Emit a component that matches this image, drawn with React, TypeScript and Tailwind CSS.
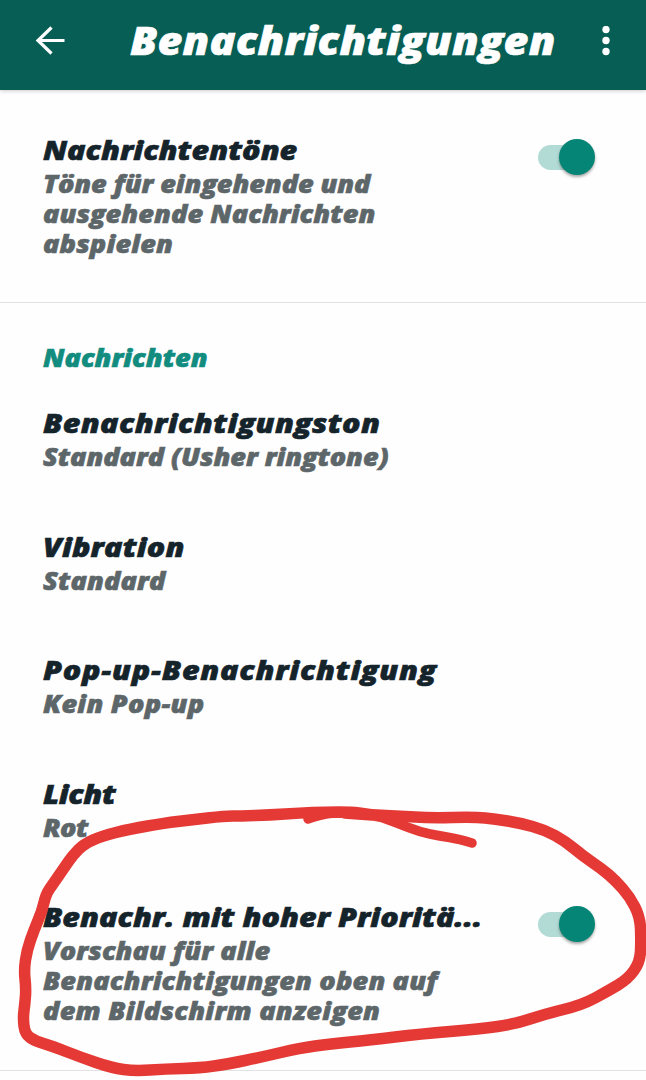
import React from 'react';

type Line = { text: string; tracking: string };

interface RowProps {
  title: Line;
  lines: Line[];
  toggle?: boolean;
}

const TAIL: [number, number][] = [
  [472, 843], [459, 839], [440, 836], [420, 832], [397, 823], [372, 814], [352, 813], [332, 813], [320, 815], [308, 819],
];

const LOOP: [number, number][] = [
  [380, 816], [366, 814], [352, 812], [325, 812], [300, 813], [270, 815], [240, 816], [225, 816], [190, 820], [165, 823], [130, 829],
  [102, 836], [84, 844], [73, 855], [64, 868], [53, 884], [46, 894], [42, 911], [34, 930], [27, 950],
  [24, 970], [26, 988], [25, 1003], [23, 1018], [25, 1034], [35, 1041], [52, 1046], [80, 1057],
  [112, 1068], [135, 1071], [165, 1069], [200, 1068], [228, 1064], [262, 1057], [300, 1048],
  [330, 1044], [370, 1040], [420, 1034], [480, 1029], [515, 1024], [545, 1014], [582, 1005],
  [608, 991], [628, 979], [640, 962], [641, 940], [640, 917], [630, 897], [615, 880], [602, 869],
  [583, 856], [565, 841], [545, 830], [520, 823], [495, 819], [475, 817], [430, 818], [400, 816],
  [372, 815], [345, 813],
];

// Smooth the hand drawn points with quadratic segments
const toPath = (points: [number, number][]) => {
  let d = `M${points[0][0]} ${points[0][1]}`;
  for (let i = 1; i < points.length - 1; i++) {
    const [x, y] = points[i];
    const [nx, ny] = points[i + 1];
    d += ` Q${x} ${y} ${(x + nx) / 2} ${(y + ny) / 2}`;
  }
  const [lx, ly] = points[points.length - 1];
  return `${d} L${lx} ${ly}`;
};

const Toggle: React.FC = () => (
  <div className="flex h-[38px] items-center">
    <div className="-mr-[19px] h-[25px] w-10 shrink-0 rounded-full bg-[#b2dbd5]"></div>
    <div className="z-10 size-9 shrink-0 rounded-full bg-[#048576] shadow-[0_2px_3px_rgba(0,0,0,0.35)]"></div>
  </div>
);

const Row: React.FC<RowProps> = ({ title, lines, toggle }) => (
  <div className="flex justify-between pl-[43px] pr-[51px]">
    <div className="origin-left scale-x-[1.13] whitespace-nowrap">
      <h2 className={`pb-[3px] text-[27px] leading-[32px] text-[#15232b] ${title.tracking}`}>{title.text}</h2>
      {lines.map((line) => (
        <p key={line.text} className={`text-[24px] leading-[30px] text-[#5d6669] ${line.tracking}`}>
          {line.text}
        </p>
      ))}
    </div>
    {toggle && (
      <div className="pt-1">
        <Toggle />
      </div>
    )}
  </div>
);

export default function App() {
  return (
    <div className="relative h-[1080px] w-[646px] overflow-hidden bg-[#fefefe] font-['Open_Sans',sans-serif] font-extrabold italic [-webkit-text-stroke:0.6px_currentColor]">
      <header className="flex h-[90px] items-center bg-[#075e54] pb-[9px] pl-[35px] pr-[36px] text-white shadow-[0_1px_4px_rgba(0,0,0,0.2)]">
        <svg width="30" height="30" viewBox="0 0 30 30" fill="none" stroke="currentColor" strokeWidth="3.2">
          <path d="M29.5 14.5H3M16.5 1.5L3 14.5L16.5 27.5" />
        </svg>
        <h1 className="-mt-0.5 ml-[65px] grow origin-left scale-x-[1.13] whitespace-nowrap text-[38px] leading-[50px] tracking-[0.18px]">
          Benachrichtigungen
        </h1>
        <svg width="8" height="30" viewBox="0 0 8 30" fill="currentColor">
          <circle cx="4" cy="3.5" r="3.7" />
          <circle cx="4" cy="14.5" r="3.7" />
          <circle cx="4" cy="25.5" r="3.7" />
        </svg>
      </header>

      <section className="h-[213px] border-b border-[#e2e2e2] pt-[44px]">
        <Row
          title={{ text: 'Nachrichtentöne', tracking: 'tracking-[0px]' }}
          lines={[
            { text: 'Töne für eingehende und', tracking: 'tracking-[-0.07px]' },
            { text: 'ausgehende Nachrichten', tracking: 'tracking-[0.04px]' },
            { text: 'abspielen', tracking: 'tracking-[0.1px]' },
          ]}
          toggle
        />
      </section>

      <section className="h-[768px] border-b border-[#e2e2e2] pt-[40px]">
        <h3 className="origin-[43px_50%] scale-x-[1.13] pl-[43px] text-[24px] leading-[30px] text-[#128c7e]">Nachrichten</h3>
        <div className="mt-[34px] flex flex-col gap-[58.6px]">
          <Row
            title={{ text: 'Benachrichtigungston', tracking: 'tracking-[0.33px]' }}
            lines={[{ text: 'Standard (Usher ringtone)', tracking: 'tracking-[-0.07px]' }]}
          />
          <Row
            title={{ text: 'Vibration', tracking: 'tracking-[0.1px]' }}
            lines={[{ text: 'Standard', tracking: 'tracking-[0.1px]' }]}
          />
          <Row
            title={{ text: 'Pop-up-Benachrichtigung', tracking: 'tracking-[0.66px]' }}
            lines={[{ text: 'Kein Pop-up', tracking: 'tracking-[0.22px]' }]}
          />
          <Row
            title={{ text: 'Licht', tracking: 'tracking-[-0.3px]' }}
            lines={[{ text: 'Rot', tracking: 'tracking-[-0.5px]' }]}
          />
          <Row
            title={{ text: 'Benachr. mit hoher Prioritä...', tracking: 'tracking-[0px]' }}
            lines={[
              { text: 'Vorschau für alle', tracking: 'tracking-[0.05px]' },
              { text: 'Benachrichtigungen oben auf', tracking: 'tracking-[0.13px]' },
              { text: 'dem Bildschirm anzeigen', tracking: 'tracking-[0.22px]' },
            ]}
            toggle
          />
        </div>
      </section>

      {/* Red marker around the last setting */}
      <svg className="pointer-events-none absolute inset-0 z-20" width="646" height="1080" viewBox="0 0 646 1080" fill="none">
        <g stroke="#e53935" strokeWidth="11.5" strokeLinecap="round" strokeLinejoin="round">
          <path d={toPath(LOOP)} />
          <path d={toPath(TAIL)} strokeWidth="9.5" />
        </g>
      </svg>
    </div>
  );
}
